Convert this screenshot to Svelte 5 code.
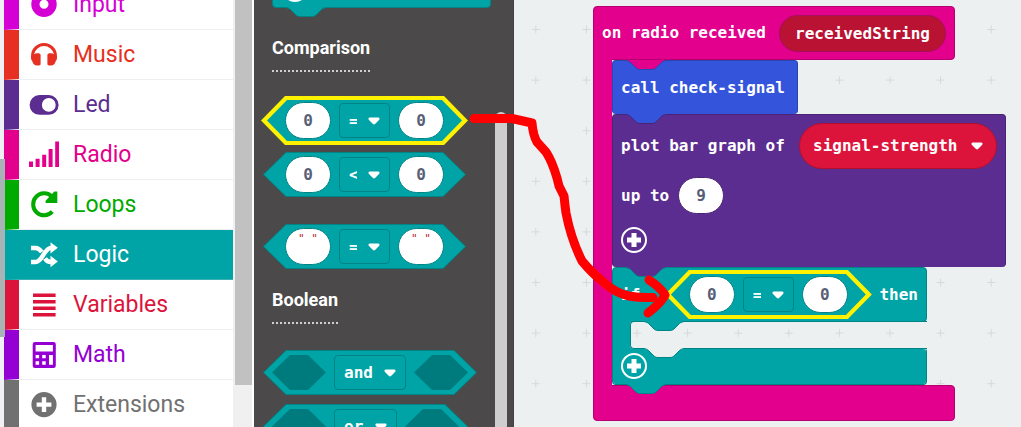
<script>
  const categories = [
    { name: 'Input', color: '#d400d4', icon: 'input' },
    { name: 'Music', color: '#e63022', icon: 'music' },
    { name: 'Led', color: '#5c2d91', icon: 'led' },
    { name: 'Radio', color: '#e3008c', icon: 'radio' },
    { name: 'Loops', color: '#00aa00', icon: 'loops' },
    { name: 'Logic', color: '#00a4a6', icon: 'logic' },
    { name: 'Variables', color: '#dc143c', icon: 'variables' },
    { name: 'Math', color: '#9400d3', icon: 'math' },
    { name: 'Extensions', color: '#717171', icon: 'extensions' },
  ];
  let selected = $state('Logic');
</script>

{#snippet icon(kind)}
  <svg class="icon" viewBox="0 0 30 30" width="30" height="30" fill="currentColor" aria-hidden="true">
    {#if kind === 'input'}
      <path fill-rule="evenodd" d="M15 1.5a12.7 12.7 0 1 0 0 25.4a12.7 12.7 0 0 0 0-25.4zM15 9.7a4.5 4.5 0 1 1 0 9a4.5 4.5 0 0 1 0-9z" />
    {:else if kind === 'music'}
      <path d="M2 18.5v-2.5a13 13 0 0 1 26 0v2.5c-.3 1.600-1 2-1.400 3-.5 2.300-2 4-4.600 4-2.600 0-3.600-.6-3.600-1.600v-9c0-1 1-1.600 3.600-1.600 1.300 0 2.300.3 3 1a10.200 10.200 0 0 0-20 0c.7-.7 1.700-1 3-1 2.600 0 3.600.6 3.600 1.600v9c0 1-1 1.600-3.600 1.600-2.600 0-4.100-1.700-4.600-4C3 20.500 2.300 20.100 2 18.500z" />
    {:else if kind === 'led'}
      <path fill-rule="evenodd" d="M10.500 5h9.200a9.900 9.900 0 0 1 0 19.800h-9.200a9.900 9.900 0 0 1 0-19.800zM19.800 8a6.900 6.900 0 1 0 0 13.800a6.900 6.900 0 0 0 0-13.800z" />
    {:else if kind === 'radio'}
      <path d="M0 21.500h4v5.500h-4zM6.600 18.700h4v8.300h-4zM13.200 14.700h4v12.300h-4zM19.600 9h4v18h-4zM26.200 1.500h4v25.500h-4z" />
    {:else if kind === 'loops'}
      <path d="M23.300 21.700A11 11 0 1 1 22.600 6.200" fill="none" stroke="currentColor" stroke-width="4" />
      <path d="M28.300 1.400v11.600h-11.700v-2.200l8.700-9.400z" />
    {:else if kind === 'logic'}
      <path d="M2 8h4.500c3.200 0 4.800 2 6.300 4M16 18.500c1.500 2.500 3 3.500 6 3.500h1M2 22h4.500c7 0 8.500-14 15.500-14h1" fill="none" stroke="currentColor" stroke-width="4.400" />
      <path d="M21.500 2.200l7.300 5.600-7.300 5.800zM21.500 15.800l7.300 5.800-7.300 5.600z" />
    {:else if kind === 'variables'}
      <path d="M4 3.600h22.600v3.400h-22.600zM4 10h22.600v3.400h-22.600zM4 16.500h22.600v3.400h-22.600zM4 23h22.600v3.400h-22.600z" />
    {:else if kind === 'math'}
      <path fill-rule="evenodd" d="M6 2h18.500a2.300 2.300 0 0 1 2.300 2.300v21.400a2.300 2.300 0 0 1-2.300 2.300h-18.500a2.300 2.300 0 0 1-2.300-2.300v-21.400a2.300 2.300 0 0 1 2.300-2.300zM6.600 5v6.500h17.300v-6.500zM6.600 15v3.300h3.500v-3.300zM13.200 15v3.300h3.500v-3.300zM20 15v9.700h3.900v-9.700zM6.600 21.300v3.400h3.500v-3.400zM13.200 21.300v3.400h3.500v-3.400z" />
    {:else}
      <path fill-rule="evenodd" d="M15 2a12.600 12.600 0 1 0 0 25.200a12.600 12.600 0 0 0 0-25.200zM12.800 7.200h4.400v5.200h5.200v4.400h-5.200v5.200h-4.400v-5.200h-5.200v-4.400h5.200z" />
    {/if}
  </svg>
{/snippet}

{#snippet notch(fill, edge)}
  <svg class="notch" viewBox="0 0 40 11" width="40" height="11" aria-hidden="true">
    <path d="M0 0V1C3 1 4 2 5 3L9 7C10.500 8.700 12 9.500 14 9.500H26C28 9.500 29.500 8.700 31 7L35 3C36 2 37 1 40 1V0Z" fill={fill} />
    <path d="M0 .5C3 1 4 2 5 3L9 7C10.500 8.700 12 9.500 14 9.500H26C28 9.500 29.500 8.700 31 7L35 3C36 2 37 1 40 .5" fill="none" stroke={edge} />
  </svg>
{/snippet}

{#snippet dropdown(value, label, kind)}
  <span class="dropdown {kind}">
    <select aria-label={label}><option>{value}</option></select>
    <svg viewBox="0 0 12 8" width="12" height="8" aria-hidden="true"><path d="M2 .5H10C11.800.5 12 2 11 3L7.300 6.800Q6 8 4.700 6.800L1 3C0 2 .2.5 2 .5Z" fill="#fff" /></svg>
  </span>
{/snippet}

{#snippet compare(op, value, kind)}
  <div class="hex {kind}">
    <input class="oval" aria-label="left value" value={value} />
    {@render dropdown(op, 'comparison', 'op')}
    <input class="oval" aria-label="right value" value={value} />
  </div>
{/snippet}

{#snippet logic(op)}
  <div class="hex bool">
    <span class="slot"></span>
    {@render dropdown(op, 'operator', 'word')}
    <span class="slot"></span>
  </div>
{/snippet}

{#snippet plus()}
  <button class="plus" aria-label="Add">
    <svg viewBox="0 0 26 26" width="26" height="26"><circle cx="13" cy="13" r="12" fill="none" stroke="#fff" stroke-width="2" /><path d="M13 6v14M6 13h14" stroke="#fff" stroke-width="5" /></svg>
  </button>
{/snippet}

<div class="editor">
  <div class="page-edge"><span></span></div>
  <nav class="toolbox">
    {#each categories as c}
      <button class="category" class:active={selected === c.name} style="--c: {c.color}" onclick={() => (selected = c.name)}>
        {@render icon(c.icon)}
        <span>{c.name}</span>
      </button>
    {/each}
  </nav>
  <div class="toolbox-scroll"><span></span></div>

  <aside class="flyout">
    <div class="items">
      <div class="stub">
        {@render plus()}
        {@render notch('#00a4a6', '#008385')}
      </div>
      <h2>Comparison</h2>
      <div class="group">
        {@render compare('=', '0', 'glow')}
        {@render compare('<', '0', '')}
      </div>
      {@render compare('=', '" "', 'strings')}
      <h2 class="second">Boolean</h2>
      <div class="group">
        {@render logic('and')}
        {@render logic('or')}
      </div>
    </div>
    <div class="flyout-scroll"></div>
  </aside>

  <main class="workspace">
    <svg class="grid" width="100%" height="100%" aria-hidden="true">
      <defs>
        <pattern id="crosses" width="50.6" height="50.6" x="-3.500" y="4.200" patternUnits="userSpaceOnUse">
          <path d="M21.300 25.300h8M25.300 21.300v8" stroke="#d5d9da" />
        </pattern>
      </defs>
      <rect width="100%" height="100%" fill="url(#crosses)" />
    </svg>

    <div class="event">
      <div class="event-head">
        <span>on radio received</span>
        <span class="argument">receivedString</span>
      </div>
      <div class="statements">
        <div class="block call">
          <span class="inlet">{@render notch('#e3008c', '#2a44b0')}</span>
          <span>call check-signal</span>
          {@render notch('#3455db', '#4a2474')}
        </div>
        <div class="block plot">
          <div class="line spread">
            <span>plot bar graph of</span>
            {@render dropdown('signal-strength', 'variable', 'variable')}
          </div>
          <div class="line">
            <label for="limit">up to</label>
            <input id="limit" class="oval" value="9" />
          </div>
          {@render plus()}
          {@render notch('#5c2d91', '#008385')}
        </div>
        <div class="condition">
          <div class="block if-head">
            <span>if</span>
            {@render compare('=', '0', 'glow')}
            <span>then</span>
          </div>
          <div class="mouth">
            <div class="mouth-space">{@render notch('#00a4a6', '#008385')}</div>
          </div>
          <div class="block if-foot">
            <span class="inlet">{@render notch('#ecf0f1', '#008385')}</span>
            {@render plus()}
            {@render notch('#00a4a6', '#008385')}
          </div>
        </div>
      </div>
      <div class="event-foot"></div>
    </div>
  </main>

  <svg class="arrow" width="1021" height="427" viewBox="0 0 1021 427" aria-hidden="true">
    <g fill="none" stroke="#f00" stroke-width="9" stroke-linecap="round" stroke-linejoin="round">
      <path d="M474 118.500L512 118.500L532 123Q533 135 537 142L546 152Q552 161 557 178L559 186L564 196Q565 206 566 213Q571 239 582 261Q592 273 602 281Q615 293 629 296Q640 298 653 297.500" />
      <path d="M649 280Q660 287 665 295Q661 303 648 313" />
    </g>
  </svg>
</div>

<style>
  :global(body) { background: #ecf0f1; }
  .editor {
    position: relative;
    display: flex;
    height: 100vh;
    overflow: hidden;
    font: bold 16px/20px "DejaVu Sans Mono", monospace;
    color: #fff;
  }
  button, input, select { font: inherit; color: inherit; border: 0; margin: 0; padding: 0; background: none; box-sizing: border-box; }
  svg { display: block; flex: none; }

  .page-edge { width: 4px; flex: none; background: #f0f1f5; padding-top: 159px; box-sizing: border-box; }
  .page-edge span { display: block; width: 5px; height: 178px; background: #a7b3b5; position: relative; z-index: 1; }
  .toolbox { width: 229px; flex: none; margin-top: -20px; }
  .category {
    display: flex;
    align-items: center;
    gap: 14px;
    width: 100%;
    height: 50px;
    padding: 1px 0 0 10px;
    border-left: 15px solid var(--c);
    border-bottom: 1px solid #ecf0f1;
    background: #fff;
    color: var(--c);
    font: 400 23px/28px Roboto, sans-serif;
    text-align: left;
  }
  .category.active { background: var(--c); color: #fff; border-bottom-color: #3ab0b5; }
  .toolbox-scroll { width: 17px; flex: none; padding-left: 2px; border-right: 2px solid #fff; background: #f0f0f0; }
  .toolbox-scroll span { display: block; height: 385px; background: #c1c1c1; }

  .flyout { width: 260px; flex: none; box-sizing: border-box; display: flex; justify-content: space-between; background: #4b4949; border-right: 1px solid #444242; }
  .items { padding-left: 9px; }
  .flyout-scroll { width: 12px; margin: 112px 6px 0 0; border-radius: 6px 6px 0 0; background: #cecece; }
  .stub { position: relative; width: 219px; height: 38px; margin: -30px 0 0 9px; padding: 5px 0 0 9px; box-sizing: border-box; background: #00a4a6; border: 1px solid #008385; border-radius: 4px; }
  h2 { width: max-content; margin: 26px 0 0 9px; padding-bottom: 8px; border-bottom: 2px dotted #d0d0d0; font: 700 18px/28px Roboto, sans-serif; }
  h2.second { margin-top: 17px; }
  .group { display: grid; justify-items: start; gap: 9px; margin-top: 26px; }

  .hex { --tip: 23px; position: relative; isolation: isolate; display: flex; align-items: center; gap: 8px; width: max-content; height: 45px; padding: 0 22px; box-sizing: border-box; }
  .hex::before, .hex::after {
    content: "";
    position: absolute;
    z-index: -1;
    inset: 0;
    background: #008385;
    clip-path: polygon(var(--tip) 0, calc(100% - var(--tip)) 0, 100% 50%, calc(100% - var(--tip)) 100%, var(--tip) 100%, 0 50%);
  }
  .hex::after { inset: 1px; --tip: 22px; background: #00a4a6; }
  .hex.glow::before { inset: -2px; --tip: 24px; background: #fff200; }
  .hex.glow::after { inset: 2px 4px; --tip: 20px; }
  .hex.strings { margin-top: 27px; }
  .hex.bool { padding: 0 9px; }
  .slot { width: 54px; height: 35px; background: #007b7d; clip-path: polygon(18px 0, 36px 0, 54px 50%, 36px 100%, 18px 100%, 0 50%); }
  .oval { width: 46px; height: 37px; border: 1px solid #008385; border-radius: 19px; background: #fff; color: #575e75; text-align: center; }
  .strings .oval { padding-bottom: 16px; color: #b0282c; font-size: 11px; font-weight: 400; }

  .dropdown { display: grid; align-items: center; flex: none; }
  .dropdown > * { grid-area: 1 / 1; }
  .dropdown svg { justify-self: end; margin-right: 10px; pointer-events: none; }
  .dropdown select { appearance: none; height: 35px; padding: 0 32px 0 9px; border: 1px solid #008385; border-radius: 4px; }
  .dropdown.op select { width: 51px; }
  .dropdown.variable select { width: 198px; height: 46px; padding-left: 13px; border-color: #b01030; border-radius: 23px; background: #dc143c; }
  .dropdown.variable svg { margin-right: 14px; }

  .workspace { position: relative; flex: 1; background: #ecf0f1; }
  .grid { position: absolute; inset: 0; }
  .event { position: absolute; left: 79px; top: 6px; width: 362px; }
  .event-head { display: flex; align-items: center; justify-content: space-between; height: 54px; padding: 0 8px; background: #e3008c; border: 1px solid #b60070; border-radius: 4px 4px 4px 0; box-sizing: border-box; }
  .argument { width: 167px; height: 37px; box-sizing: border-box; border: 1px solid #a50f5c; border-radius: 19px; background: #b91232; line-height: 35px; text-align: center; }
  .statements { display: grid; justify-items: start; position: relative; margin-top: -1px; padding: 1px 0 1px 18px; margin-bottom: -1px; border-left: 1px solid #b60070; background: linear-gradient(#e3008c, #e3008c) 0 0 / 18px 100% no-repeat; }
  .event-foot { height: 36px; box-sizing: border-box; background: #e3008c; border: 1px solid #b60070; border-radius: 0 4px 4px 4px; }
  .block { position: relative; box-sizing: border-box; border: 1px solid; border-bottom-width: 0; border-radius: 4px; }
  .block > span { white-space: nowrap; }
  .notch { position: absolute; z-index: 1; left: 13px; bottom: -11px; }
  .inlet { position: absolute; left: 0; top: -1px; }
  .inlet .notch { top: 0; bottom: auto; }
  .call { display: flex; align-items: center; width: 186px; height: 54px; padding-left: 8px; background: #3455db; border-color: #2a44b0; }
  .plot { display: grid; justify-items: start; width: 394px; height: 153px; align-content: start; padding: 8px 8px 0; background: #5c2d91; border-color: #4a2474; }
  .line { display: flex; align-items: center; gap: 9px; }
  .line.spread { justify-self: stretch; justify-content: space-between; margin-bottom: 8px; }
  .plot .oval { border-color: #4a2474; }
  .plus { display: block; width: 26px; height: 26px; }
  .plot .plus { margin-top: 13px; }
  .condition { width: 315px; }
  .if-head { display: flex; align-items: center; justify-content: space-between; height: 55px; padding: 0 8px; background: #00a4a6; border-color: #008385; border-radius: 4px 4px 4px 0; border-bottom-width: 1px; }
  .if-head .hex { margin-left: 17px; }
  .mouth { position: relative; z-index: 1; height: 28px; margin: -1px 0; padding-left: 17px; box-sizing: border-box; border-left: 1px solid #008385; background: linear-gradient(#00a4a6, #00a4a6) 0 0 / 17px 100% no-repeat; }
  .mouth-space { position: relative; height: 100%; box-sizing: border-box; border: 1px solid #008385; border-right: 0; border-radius: 4px 0 0 4px; box-shadow: -4px 0 0 #00a4a6; }
  .mouth-space .notch { top: -1px; bottom: auto; }
  .if-foot { z-index: 2; height: 37px; padding: 4px 0 0 8px; background: #00a4a6; border-color: #008385; border-radius: 0 4px 4px 4px; border-bottom-width: 1px; border-top-color: transparent; background-clip: padding-box; }
  .if-foot .inlet { left: 18px; }

  .arrow { position: absolute; left: 0; top: 0; z-index: 5; pointer-events: none; }
</style>
